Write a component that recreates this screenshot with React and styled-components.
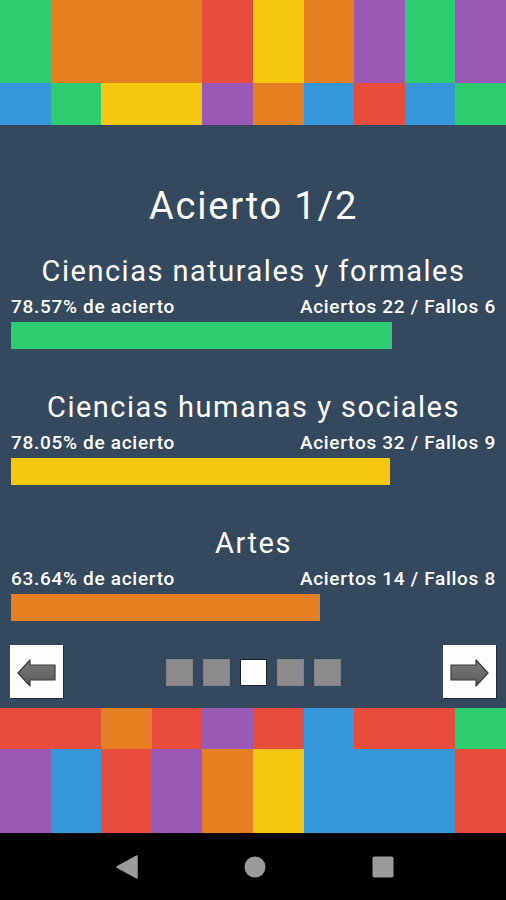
import React from 'react'
import styled, { createGlobalStyle } from 'styled-components'

const GREEN = '#2ecc71'
const ORANGE = '#e67e22'
const RED = '#e74c3c'
const YELLOW = '#f5c70f'
const PURPLE = '#9b59b6'
const BLUE = '#3498db'

const GlobalStyle = createGlobalStyle`
  html, body {
    margin: 0;
    padding: 0;
    background: #000;
  }
  body {
    font-family: Roboto, "Liberation Sans", sans-serif;
  }
`

const Screen = styled.div`
  width: 506px;
  height: 900px;
  display: flex;
  flex-direction: column;
  background: #34495e;
  overflow: hidden;
`

const Mosaic = styled.div`
  display: grid;
  grid-template-columns: repeat(10, 1fr);
  grid-template-rows: ${p => p.$rows};
  flex-shrink: 0;
`

const Tile = styled.div`
  background: ${p => p.$color};
  grid-column: span ${p => p.$span || 1};
`

const Content = styled.div`
  flex: 1;
  display: flex;
  flex-direction: column;
  padding: 59px 10px 10px 11px;
  color: #fff;
`

const Title = styled.h1`
  margin: 0 0 26px;
  font-size: 38px;
  line-height: 44px;
  font-weight: 400;
  letter-spacing: 1.8px;
  text-align: center;
`

const Section = styled.div`
  display: flex;
  flex-direction: column;
  margin-bottom: ${p => p.$last ? '24px' : '41px'};
`

const Category = styled.h2`
  margin: 0 0 8px;
  font-size: 29px;
  line-height: 34px;
  font-weight: 400;
  letter-spacing: 1.5px;
  text-align: center;
  white-space: nowrap;
`

const StatRow = styled.div`
  display: flex;
  justify-content: space-between;
  font-size: 19px;
  line-height: 22px;
  font-weight: 500;
  letter-spacing: 0.7px;
  margin-bottom: 4px;
  white-space: nowrap;
`

const Track = styled.div`
  height: 27px;
  width: 100%;
`

const Fill = styled.div`
  height: 100%;
  background: ${p => p.$color};
`

const Pager = styled.div`
  display: flex;
  align-items: center;
  justify-content: space-between;
  margin-left: -1px;
`

const ArrowButton = styled.button`
  width: 53px;
  height: 53px;
  padding: 0;
  border: none;
  background: #fdfdfd;
  box-shadow: 1px 1px 0 #1c2a36;
  display: flex;
  align-items: center;
  justify-content: center;
`

const Dots = styled.div`
  display: flex;
  gap: 10px;
  margin-top: 1px;
`

const Dot = styled.div`
  width: 27px;
  height: 27px;
  box-sizing: border-box;
  background: ${p => p.$active ? '#ffffff' : '#8d8b8d'};
  border: 1px solid ${p => p.$active ? '#14202c' : '#7f8386'};
`

const NavBar = styled.div`
  height: 67px;
  flex-shrink: 0;
  background: #000;
  display: flex;
  align-items: center;
  justify-content: center;
  gap: 106px;
  padding-left: 4px;
`

const topTiles = [
  [GREEN, 1], [ORANGE, 3], [RED, 1], [YELLOW, 1], [ORANGE, 1], [PURPLE, 1], [GREEN, 1], [PURPLE, 1],
  [BLUE, 1], [GREEN, 1], [YELLOW, 2], [PURPLE, 1], [ORANGE, 1], [BLUE, 1], [RED, 1], [BLUE, 1], [GREEN, 1],
]

const bottomTiles = [
  [RED, 2], [ORANGE, 1], [RED, 1], [PURPLE, 1], [RED, 1], [BLUE, 1], [RED, 2], [GREEN, 1],
  [PURPLE, 1], [BLUE, 1], [RED, 1], [PURPLE, 1], [ORANGE, 1], [YELLOW, 1], [BLUE, 3], [RED, 1],
]

const categories = [
  { name: 'Ciencias naturales y formales', pct: 78.57, ok: 22, ko: 6, color: GREEN },
  { name: 'Ciencias humanas y sociales', pct: 78.05, ok: 32, ko: 9, color: YELLOW },
  { name: 'Artes', pct: 63.64, ok: 14, ko: 8, color: ORANGE },
]

const Arrow = ({ flip }) => (
  <svg width="53" height="53" viewBox="0 0 53 53" style={flip ? { transform: 'scaleX(-1)' } : undefined}>
    <defs>
      <linearGradient id={flip ? 'ag2' : 'ag1'} x1="0" y1="0" x2="0" y2="1">
        <stop offset="0" stopColor="#7a7a7a" />
        <stop offset="1" stopColor="#5a5a5a" />
      </linearGradient>
    </defs>
    <polygon
      points="8,28 20,15 20,20 45,20 45,35 20,35 20,41"
      fill={`url(#${flip ? 'ag2' : 'ag1'})`}
      stroke="#3a3a3a"
      strokeWidth="1.2"
      strokeLinejoin="round"
    />
  </svg>
)

const Mosaicband = ({ tiles, rows }) => (
  <Mosaic $rows={rows}>
    {tiles.map(([c, s], i) => <Tile key={i} $color={c} $span={s} />)}
  </Mosaic>
)

export default function App() {
  return (
    <Screen>
      <GlobalStyle />
      <Mosaicband tiles={topTiles} rows="83px 42px" />
      <Content>
        <Title>Acierto 1/2</Title>
        {categories.map((c, i) => (
          <Section key={c.name} $last={i === categories.length - 1}>
            <Category>{c.name}</Category>
            <StatRow>
              <span>{c.pct.toFixed(2)}% de acierto</span>
              <span>Aciertos {c.ok} / Fallos {c.ko}</span>
            </StatRow>
            <Track>
              <Fill $color={c.color} style={{ width: `${c.pct}%` }} />
            </Track>
          </Section>
        ))}
        <Pager>
          <ArrowButton><Arrow /></ArrowButton>
          <Dots>
            {[0, 1, 2, 3, 4].map(i => <Dot key={i} $active={i === 2} />)}
          </Dots>
          <ArrowButton><Arrow flip /></ArrowButton>
        </Pager>
      </Content>
      <Mosaicband tiles={bottomTiles} rows="41px 84px" />
      <NavBar>
        <svg width="22" height="24" viewBox="0 0 22 24">
          <path d="M21 1 L21 23 L1 12 Z" fill="#9b9b9b" stroke="#9b9b9b" strokeWidth="1.5" strokeLinejoin="round" />
        </svg>
        <svg width="22" height="22" viewBox="0 0 22 22">
          <circle cx="11" cy="11" r="10.5" fill="#9b9b9b" />
        </svg>
        <svg width="22" height="22" viewBox="0 0 22 22">
          <rect x="0.5" y="0.5" width="21" height="21" rx="2" fill="#9b9b9b" />
        </svg>
      </NavBar>
    </Screen>
  )
}
